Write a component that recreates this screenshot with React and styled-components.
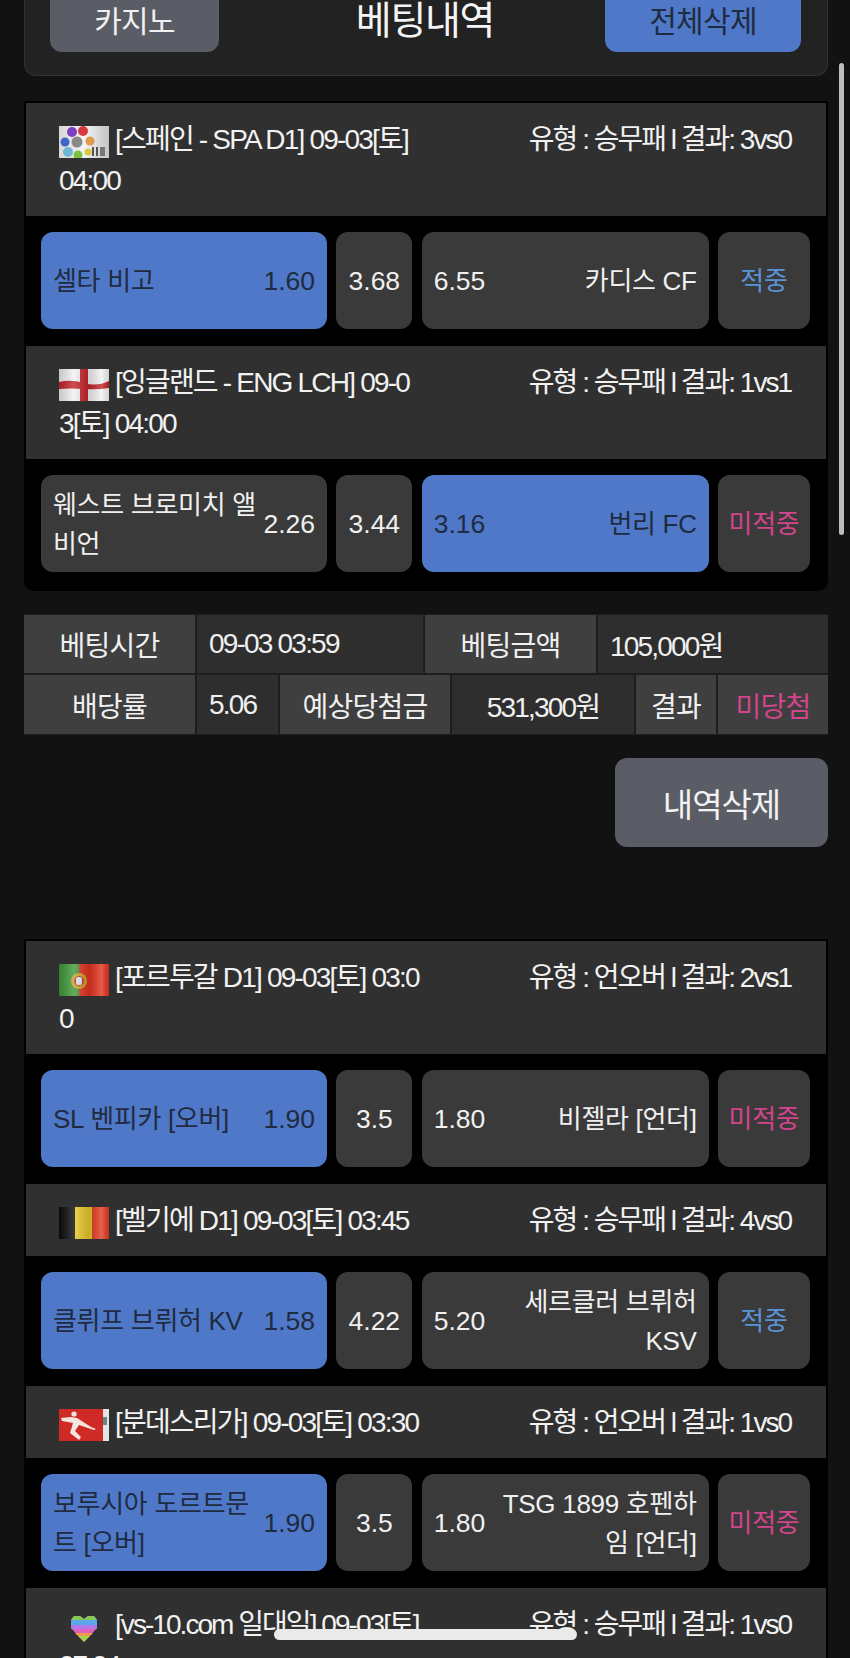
import React from 'react';
import styled, { createGlobalStyle } from 'styled-components';

const GlobalStyle = createGlobalStyle`
  html, body {
    margin: 0;
    padding: 0;
    background: #121212;
  }
  body {
    font-family: "Liberation Sans", "Noto Sans CJK KR", sans-serif;
    color: #f0f0f0;
  }
`;

const Screen = styled.div`
  position: relative;
  width: 850px;
  height: 1658px;
  overflow: hidden;
  background: #121212;
`;

const Scrolled = styled.div`
  margin-top: -20px;
  padding: 0 22px 0 24px;
`;

const TopPanel = styled.div`
  display: grid;
  grid-template-columns: 169px 1fr 196px;
  align-items: center;
  height: 96px;
  padding: 0 26px 23px 25px;
  box-sizing: border-box;
  background: #222;
  border: 1px solid #333;
  border-top: 0;
  border-radius: 0 0 12px 12px;
`;

const TopButton = styled.div`
  display: flex;
  align-items: center;
  justify-content: center;
  height: 72px;
  padding-top: 6px;
  box-sizing: border-box;
  border-radius: 12px;
  font-size: 30px;
  letter-spacing: -0.7px;
  background: ${props => (props.$primary ? '#4f79c8' : '#5a5d65')};
  color: ${props => (props.$primary ? '#1f2b40' : '#f0f0f0')};
`;

const Title = styled.div`
  padding: 2px 0 0 26px;
  text-align: center;
  font-size: 39px;
  letter-spacing: -1.3px;
  color: #f4f4f4;
`;

const Card = styled.div`
  margin-top: ${props => props.$top}px;
  border: 2px solid #000;
  border-bottom: 0;
  background: #000;
  border-radius: 2px 2px 10px 10px;
  padding-bottom: 2px;
`;

const MatchHeader = styled.div`
  display: flex;
  justify-content: space-between;
  padding: 16px 35px 15px 33px;
  background: #303030;
  font-size: 28px;
  line-height: 41px;
  letter-spacing: -2px;
  color: #f2f2f2;
`;

const MatchTitle = styled.div`
  width: 363px;
  word-break: break-all;
  letter-spacing: ${props => (props.$tight ? '-1.95px' : '-1.8px')};
`;

const MatchResult = styled.div`
  white-space: nowrap;
`;

const FlagBox = styled.svg`
  display: inline-block;
  width: 50px;
  height: 32px;
  margin-right: 6px;
  vertical-align: -9px;
  filter: blur(0.5px);
`;

const PickRow = styled.div`
  display: grid;
  grid-template-columns: 286px 76px 287px 92px;
  column-gap: 9.33px;
  padding: 16px 16px 17px 15px;
`;

const PickCell = styled.div`
  display: flex;
  align-items: center;
  justify-content: ${props => (props.$center ? 'center' : 'space-between')};
  gap: 5px;
  height: 97px;
  padding: ${props => (props.$center ? '2px 0 0' : '2px 12px 0')};
  box-sizing: border-box;
  border-radius: 12px;
  font-size: 26.5px;
  line-height: 39px;
  background: ${props => (props.$picked ? '#4f79c8' : '#3a3a3a')};
  color: ${props => (props.$picked ? '#1f2b40' : '#f0f0f0')};
`;

const TeamName = styled.div`
  flex: 1;
  min-width: 0;
  font-size: 26px;
  letter-spacing: -0.3px;
  text-align: ${props => (props.$right ? 'right' : 'left')};
`;

const Odds = styled.div`
  flex: none;
`;

const Outcome = styled.div`
  font-size: 26px;
  letter-spacing: -0.3px;
  color: ${props => (props.$hit ? '#5a93d6' : '#d2448c')};
`;

const Summary = styled.div`
  display: flex;
  flex-direction: column;
  gap: 2px;
  margin-top: 23px;
  padding: 1px 0;
  background: #1d1d1d;
`;

const SummaryRow = styled.div`
  display: grid;
  grid-template-columns: ${props => props.$cols};
  column-gap: 2px;
  height: ${props => props.$height}px;
`;

const SummaryCell = styled.div`
  display: flex;
  align-items: center;
  justify-content: ${props => (props.$left ? 'flex-start' : 'center')};
  padding-left: ${props => (props.$left ? '12px' : '0')};
  background: ${props => (props.$label ? '#3f3f3f' : '#2e2e2e')};
  font-size: 28px;
  letter-spacing: ${props => (props.$label ? '-0.8px' : '-1.8px')};
  color: ${props => (props.$miss ? '#d2448c' : '#f0f0f0')};
`;

const ButtonRow = styled.div`
  display: flex;
  justify-content: flex-end;
  margin-top: 23px;
`;

const DeleteButton = styled.div`
  display: flex;
  align-items: center;
  justify-content: center;
  width: 213px;
  height: 89px;
  border-radius: 12px;
  background: #5a5d65;
  font-size: 33px;
  letter-spacing: -1px;
  color: #f2f2f2;
`;

const ScrollThumb = styled.div`
  position: absolute;
  top: 63px;
  left: 839px;
  width: 5px;
  height: 472px;
  border-radius: 3px;
  background: #bdbdbd;
`;

const HomeBar = styled.div`
  position: absolute;
  top: 1629px;
  left: 274px;
  width: 303px;
  height: 11px;
  border-radius: 6px;
  background: #eaeaea;
`;

// little waving flag images
const Gloss = ({ id }) => (
  <>
    <defs>
      <linearGradient id={id}>
        <stop offset="0" stopColor="#000" stopOpacity="0.18" />
        <stop offset="0.3" stopColor="#fff" stopOpacity="0.18" />
        <stop offset="0.6" stopColor="#000" stopOpacity="0.14" />
        <stop offset="0.85" stopColor="#fff" stopOpacity="0.2" />
        <stop offset="1" stopColor="#000" stopOpacity="0.12" />
      </linearGradient>
    </defs>
    <rect width="50" height="32" fill={`url(#${id})`} />
  </>
);

const flags = {
  spain: (
    <>
      <defs>
        <linearGradient id="ligaBg">
          <stop offset="0" stopColor="#d8d8d8" />
          <stop offset="0.5" stopColor="#f4f4f4" />
          <stop offset="1" stopColor="#c4c4c4" />
        </linearGradient>
      </defs>
      <rect width="50" height="32" fill="url(#ligaBg)" />
      <circle cx="6" cy="16" r="4.5" fill="#3f67c9" />
      <circle cx="13" cy="6" r="5" fill="#7b3fc0" />
      <circle cx="24" cy="5" r="5" fill="#d8373f" />
      <circle cx="31" cy="15" r="4.5" fill="#e29a4a" />
      <circle cx="9" cy="26" r="5" fill="#6fb6d8" />
      <circle cx="19" cy="29" r="4.5" fill="#7cc23f" />
      <circle cx="29" cy="26" r="3.5" fill="#d9c93f" />
      <circle cx="18" cy="16" r="5.5" fill="#8a8a8a" />
      <rect x="33" y="21" width="2" height="9" fill="#555" />
      <rect x="37" y="21" width="2" height="9" fill="#555" />
      <rect x="41" y="21" width="5" height="9" fill="#777" />
    </>
  ),
  england: (
    <>
      <rect width="50" height="32" fill="#f2f2f2" />
      <rect x="21" width="8" height="32" fill="#c4252c" />
      <path d="M0 13 Q12 10 25 14 T50 12 V19 Q38 21 25 20 T0 20 Z" fill="#c4252c" />
      <Gloss id="glossEng" />
    </>
  ),
  portugal: (
    <>
      <rect width="50" height="32" fill="#e2331f" />
      <rect width="20" height="32" fill="#3f9a3c" />
      <circle cx="20" cy="17" r="8" fill="#c9a227" />
      <circle cx="20" cy="17" r="5" fill="#c4352a" />
      <rect x="17" y="13" width="6" height="8" rx="2" fill="#dfe6ee" />
      <Gloss id="glossPor" />
    </>
  ),
  belgium: (
    <>
      <rect width="50" height="32" fill="#e33b1f" />
      <rect width="16" height="32" fill="#0c0c0c" />
      <rect x="16" width="17" height="32" fill="#e8c92c" />
      <Gloss id="glossBel" />
    </>
  ),
  bundesliga: (
    <>
      <rect width="50" height="32" fill="#cf2a26" />
      <rect x="44" width="6" height="32" fill="#e4e4e4" />
      <circle cx="15" cy="5" r="2.6" fill="#f3e6e0" />
      <path d="M2 9 L12 8 L18 9 L32 18 L37 20 L35 21 L20 16 L16 22 L22 28 L20 31 L11 24 L14 14 L3 12 Z" fill="#f3e6e0" />
      <rect x="44" y="8" width="4" height="8" fill="#5d8a86" />
    </>
  ),
  heart: (
    <>
      <rect width="50" height="32" fill="#303030" />
      <path d="M25 31 L12 17 L12 9 L15 5 L21 5 L25 8 L29 5 L35 5 L38 9 L38 17 Z" fill="#e060c0" />
      <path d="M12 9 L15 5 L21 5 L25 8 L29 5 L35 5 L38 9 V10 H12 Z" fill="#86c95a" />
      <rect x="12" y="9" width="26" height="5" fill="#5aa8ea" />
      <rect x="12" y="14" width="26" height="4" fill="#b277e8" />
      <path d="M16 22 H34 L31 25 H19 Z" fill="#f09a50" />
      <path d="M19 25 H31 L25 31 Z" fill="#a8d050" />
    </>
  ),
};

const Flag = ({ name }) => (
  <FlagBox viewBox="0 0 50 32" preserveAspectRatio="none">{flags[name]}</FlagBox>
);

const Match = ({ m }) => (
  <>
    <MatchHeader>
      <MatchTitle $tight={m.tight}>
        <Flag name={m.flag} />
        {m.title}
      </MatchTitle>
      <MatchResult>{m.result}</MatchResult>
    </MatchHeader>
    {m.home && (
      <PickRow>
        <PickCell $picked={m.pick === 'home'}>
          <TeamName>{m.home}</TeamName>
          <Odds>{m.homeOdds}</Odds>
        </PickCell>
        <PickCell $center>{m.draw}</PickCell>
        <PickCell $picked={m.pick === 'away'}>
          <Odds>{m.awayOdds}</Odds>
          <TeamName $right>{m.away}</TeamName>
        </PickCell>
        <PickCell $center>
          <Outcome $hit={m.hit}>{m.hit ? '적중' : '미적중'}</Outcome>
        </PickCell>
      </PickRow>
    )}
  </>
);

const firstBet = [
  { flag: 'spain', title: '[스페인 - SPA D1] 09-03[토] 04:00', result: '유형 : 승무패 l 결과: 3vs0', home: '셀타 비고', homeOdds: '1.60', draw: '3.68', awayOdds: '6.55', away: '카디스 CF', pick: 'home', hit: true },
  { flag: 'england', title: '[잉글랜드 - ENG LCH] 09-03[토] 04:00', result: '유형 : 승무패 l 결과: 1vs1', home: '웨스트 브로미치 앨비언', homeOdds: '2.26', draw: '3.44', awayOdds: '3.16', away: '번리 FC', pick: 'away', hit: false },
];

const secondBet = [
  { flag: 'portugal', title: '[포르투갈 D1] 09-03[토] 03:00', result: '유형 : 언오버 l 결과: 2vs1', home: 'SL 벤피카 [오버]', homeOdds: '1.90', draw: '3.5', awayOdds: '1.80', away: '비젤라 [언더]', pick: 'home', hit: false },
  { flag: 'belgium', title: '[벨기에 D1] 09-03[토] 03:45', result: '유형 : 승무패 l 결과: 4vs0', home: '클뤼프 브뤼허 KV', homeOdds: '1.58', draw: '4.22', awayOdds: '5.20', away: '세르클러 브뤼허 KSV', pick: 'home', hit: true },
  { flag: 'bundesliga', title: '[분데스리가] 09-03[토] 03:30', result: '유형 : 언오버 l 결과: 1vs0', home: '보루시아 도르트문트 [오버]', homeOdds: '1.90', draw: '3.5', awayOdds: '1.80', away: 'TSG 1899 호펜하임 [언더]', pick: 'home', hit: false },
  { flag: 'heart', title: '[vs-10.com 일대일] 09-03[토] 07:04', result: '유형 : 승무패 l 결과: 1vs0', tight: true },
];

export default function App() {
  return (
    <>
      <GlobalStyle />
      <Screen>
        <Scrolled>
          <TopPanel>
            <TopButton>카지노</TopButton>
            <Title>베팅내역</Title>
            <TopButton $primary>전체삭제</TopButton>
          </TopPanel>

          <Card $top={25}>
            {firstBet.map(m => <Match key={m.title} m={m} />)}
          </Card>

          <Summary>
            <SummaryRow $cols="171px 226px 171px 1fr" $height={58}>
              <SummaryCell $label>베팅시간</SummaryCell>
              <SummaryCell $left>09-03 03:59</SummaryCell>
              <SummaryCell $label>베팅금액</SummaryCell>
              <SummaryCell $left>105,000원</SummaryCell>
            </SummaryRow>
            <SummaryRow $cols="171px 81px 170px 182px 80px 1fr" $height={59}>
              <SummaryCell $label>배당률</SummaryCell>
              <SummaryCell $left>5.06</SummaryCell>
              <SummaryCell $label>예상당첨금</SummaryCell>
              <SummaryCell>531,300원</SummaryCell>
              <SummaryCell $label>결과</SummaryCell>
              <SummaryCell $label $miss>미당첨</SummaryCell>
            </SummaryRow>
          </Summary>

          <ButtonRow>
            <DeleteButton>내역삭제</DeleteButton>
          </ButtonRow>

          <Card $top={92}>
            {secondBet.map(m => <Match key={m.title} m={m} />)}
          </Card>
        </Scrolled>
        <ScrollThumb />
        <HomeBar />
      </Screen>
    </>
  );
}
